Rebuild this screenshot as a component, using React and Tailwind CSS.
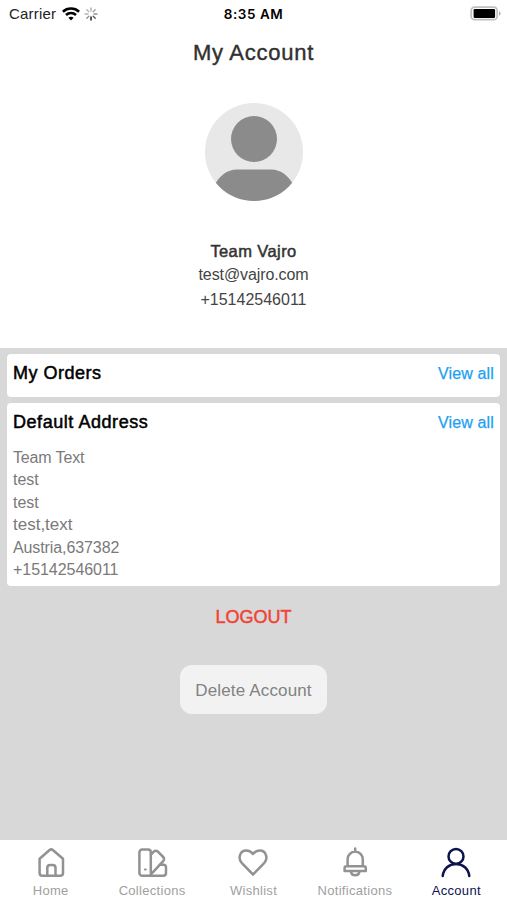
import React from "react";

function StatusBar() {
  return (
    <header className="grid h-7 grid-cols-3 items-center text-[14px] text-[#222]">
      <div className="flex items-center pl-[9px]">
        <span className="w-[53px] whitespace-nowrap text-[15px] tracking-[0.2px]">Carrier</span>
        <svg className="h-[14px] w-[18px]" viewBox="0 0 18 14" fill="none" stroke="#000" strokeWidth="2.6">
          <path d="M.9 4.7C5.4.5 12.6.5 17.1 4.7" />
          <path d="M4 8c2.8-2.6 7.2-2.6 10 0" />
          <path d="M9 13.4 6.4 10.8c1.5-1.3 3.7-1.3 5.2 0z" fill="#000" stroke="none" />
        </svg>
        <svg className="ml-1 h-[14px] w-[14px]" viewBox="0 0 14 14" stroke="#444" strokeWidth="1.3" strokeLinecap="round">
          <path d="M7 1v3" opacity=".45" />
          <path d="m11.2 2.8-2 2" opacity=".5" />
          <path d="M13 7h-3" opacity=".6" />
          <path d="m11.2 11.2-2-2" opacity=".9" />
          <path d="M7 13v-3" stroke="#000" />
          <path d="m2.8 11.2 2-2" opacity=".6" />
          <path d="M1 7h3" opacity=".4" />
          <path d="m2.8 2.8 2 2" opacity=".4" />
        </svg>
      </div>
      <span className="text-center font-['Inter'] text-[13.5px] font-semibold tracking-[0.55px] text-black">8:35 AM</span>
      <svg className="mr-[5px] h-4 w-8 justify-self-end" viewBox="0 0 32 16">
        <rect x="1.2" y="1.2" width="26" height="12.5" rx="3.5" fill="#fff" stroke="#c0c0c0" strokeWidth="1.8" />
        <rect x="3.6" y="3" width="21.5" height="9" rx="1.2" fill="#000" />
        <path d="M29 5.2c2 .8 2 3.7 0 4.5z" fill="#aaa" />
      </svg>
    </header>
  );
}

function Avatar() {
  return (
    <svg className="h-[98px] w-[98px]" viewBox="0 0 98 98">
      <defs>
        <clipPath id="avatar">
          <circle cx="49" cy="49" r="49" />
        </clipPath>
      </defs>
      <g clipPath="url(#avatar)">
        <rect width="98" height="98" fill="#e8e8e8" />
        <circle cx="49" cy="36" r="23" fill="#8b8b8b" />
        <path d="M9 83C14 73 22 66.5 32 66.5H66C76 66.5 84 73 89 83V98H9Z" fill="#8b8b8b" />
      </g>
    </svg>
  );
}

function CardHeader({ title, className }) {
  return (
    <div className="flex h-[39px] items-center justify-between">
      <h2 className={`text-[18px] text-black [-webkit-text-stroke:0.5px_#000] ${className}`}>{title}</h2>
      <a className="text-[16px] tracking-[0.15px] text-[#21a0f0] [-webkit-text-stroke:0.25px_#21a0f0]">View all</a>
    </div>
  );
}

const address = [
  ["Team Text", "text-[16px] tracking-[-0.15px]"],
  ["test", "text-[16px]"],
  ["test", "text-[16px]"],
  ["test,text", "text-[17px]"],
  ["Austria,637382", "text-[16px] tracking-[-0.1px]"],
  ["+15142546011", "text-[16px] tracking-[-0.05px]"],
];

const tabs = [
  {
    label: "Home",
    icon: (
      <>
        <path d="M4.6 11.8 14.6 3Q16.200 1.700 17.800 3L28 11.800V26a2.800 2.800 0 0 1-2.800 2.800H7.400A2.800 2.800 0 0 1 4.600 26Z" />
        <path d="M12.300 28.800V20.800a2.800 2.800 0 0 1 2.800-2.800h2.600a2.800 2.800 0 0 1 2.800 2.800v8" />
      </>
    ),
  },
  {
    label: "Collections",
    icon: (
      <>
        <path d="M14.800 25.500V5.300a2.800 2.800 0 0 0-2.800-2.800H6.200a2.800 2.800 0 0 0-2.800 2.800V26a2.800 2.800 0 0 0 2.800 2.800H27.300a2.700 2.700 0 0 0 2.700-2.700V20.500a2.700 2.700 0 0 0-2.700-2.700H24" />
        <path d="m15 7.500 2.800-2.800a2.900 2.900 0 0 1 4.100 0l5.300 5.300a2.900 2.900 0 0 1 0 4.100L14 28.300" />
        <circle cx="9.200" cy="22.500" r=".8" fill="currentColor" strokeWidth="1" />
      </>
    ),
  },
  {
    label: "Wishlist",
    icon: (
      <path d="M16 27.500 4.900 16.200C.500 11.400 2.900 3.500 9.200 3.500c2.900 0 5.100 1.300 6.800 3.500 1.700-2.200 3.900-3.500 6.800-3.500 6.300 0 8.700 7.900 4.300 12.700Z" />
    ),
  },
  {
    label: "Notifications",
    icon: (
      <>
        <path d="M16.200 1.500V4.500M8.600 19.300V12.200a7.600 7.600 0 0 1 15.200 0v7.100M7.400 19.300h17.600a1.800 1.800 0 0 1 1.800 1.800v2.800H5.600v-2.800A1.800 1.800 0 0 1 7.400 19.300Z" />
        <path d="M12 24.500c.6 5 7.800 5 8.400 0" />
      </>
    ),
  },
  {
    label: "Account",
    active: true,
    icon: (
      <>
        <circle cx="16" cy="9.400" r="7.500" />
        <path d="M2.700 29C3.500 21.700 9 16.900 16 16.900S28.500 21.700 29.300 29" />
      </>
    ),
  },
];

export default function App() {
  return (
    <div className="flex h-[900px] w-[507px] flex-col overflow-hidden bg-[#d8d8d8] font-['Liberation_Sans',Arial,sans-serif]">
      <section className="flex h-[348px] flex-col bg-white">
        <StatusBar />
        <h1 className="flex h-12 items-center justify-center text-[22px] tracking-[0.75px] text-[#303030] [-webkit-text-stroke:0.4px_#303030]">My Account</h1>
        <div className="mt-[27px] flex flex-col items-center text-[#444]">
          <Avatar />
          <p className="mt-[38px] h-6 text-[16.5px] leading-6 tracking-[0.4px] text-[#333] [-webkit-text-stroke:0.5px_#333]">Team Vajro</p>
          <p className="h-6 text-[16px] leading-6 tracking-[-0.1px]">test@vajro.com</p>
          <p className="h-6 text-[16px] leading-[25px]">+15142546011</p>
        </div>
      </section>

      <main className="flex flex-1 flex-col items-center px-[7px] pt-1.5">
        <section className="h-[43px] w-full rounded bg-white px-1.5">
          <CardHeader title="My Orders" className="tracking-[0.5px]" />
        </section>
        <section className="mt-1.5 h-[183px] w-full rounded bg-white px-1.5">
          <CardHeader title="Default Address" className="tracking-[0.55px]" />
          <div className="mt-[5px] text-[#7a7a7a]">
            {address.map(([line, style], i) => (
              <p key={i} className={`h-[22.4px] leading-[22.4px] ${style}`}>{line}</p>
            ))}
          </div>
        </section>
        <button className="mt-[19px] h-6 text-[18px] leading-6 text-[#f04438] [-webkit-text-stroke:0.5px_#f04438]">LOGOUT</button>
        <button className="mt-9 h-[49px] w-[147px] rounded-xl bg-[#f2f2f2] pt-0.5 text-[17px] tracking-[0.15px] whitespace-nowrap text-[#828282]">Delete Account</button>
      </main>

      <nav className="grid h-[60px] grid-cols-5 bg-white">
        {tabs.map(({ label, icon, active }) => (
          <div key={label} className={`flex flex-col items-center pt-[7px] ${active ? "text-[#0c1450]" : "text-[#929292]"}`}>
            <svg className="h-8 w-8" viewBox="0 0 32 32" fill="none" stroke="currentColor" strokeWidth="2.5" strokeLinecap="round" strokeLinejoin="round">{icon}</svg>
            <span className={`mt-1 text-[13px] leading-4 tracking-[0.3px] ${active ? "" : "text-[#a0a0a0]"}`}>{label}</span>
          </div>
        ))}
      </nav>
    </div>
  );
}
